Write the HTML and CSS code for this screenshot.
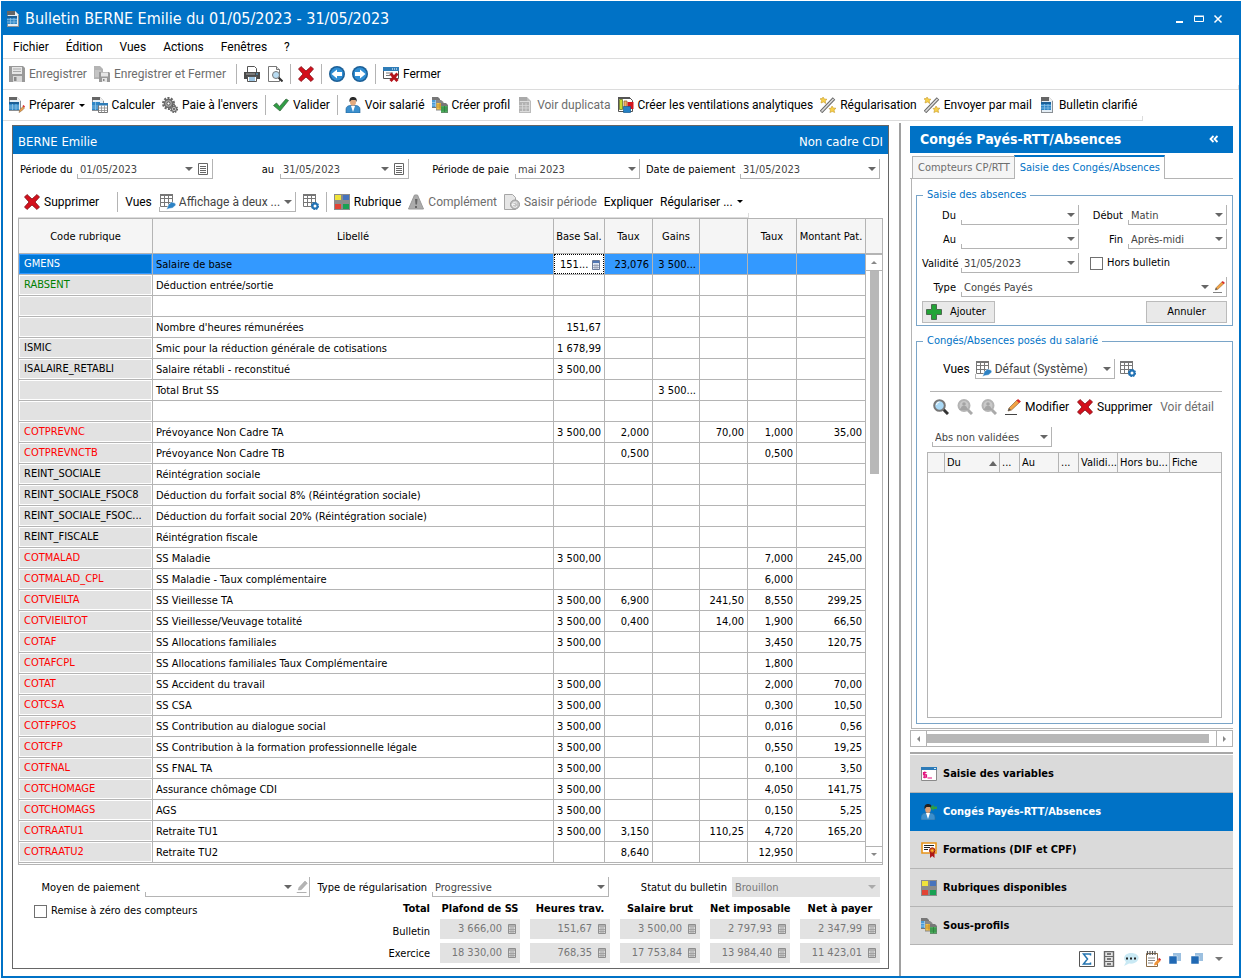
FILE: index.html
```html
<!DOCTYPE html>
<html lang="fr">

<head>
  <meta charset="utf-8">
  <meta name="viewport" content="width=device-width">
  <title>Bulletin BERNE Emilie</title>

  <link rel="stylesheet" href="styles.css">
</head>

<body>
  <!-- icon set -->
  <svg class="sprite" aria-hidden="true">
    <symbol id="i-doc" viewBox="0 0 16 16"><path d="M2 0h8l4 4v12H2z" fill="#8a8f94" /><path d="M3 4h10v11H3z" fill="#e4eef6" /><path d="M2 0h8v4H2z" fill="#666" /><path d="M10 0v4h4z" fill="#eee" /><path d="M2 5h10v8H2z" fill="#2f86c6" /><path d="M2 5h10v2H2z" fill="#1c5f96" /><path d="M2 8.500h10M2 11h10M5.500 7v6M9 7v6" stroke="#8fc4e8" stroke-width=".7" /></symbol>
    <symbol id="i-docgrey" viewBox="0 0 16 16"><path d="M2 0h8l4 4v12H2z" fill="#bbb" /><path d="M3 4h10v11H3z" fill="#ddd" /><path d="M2 0h8v4H2z" fill="#aaa" /><path d="M2 5h10v9H2z" fill="#b2b2b2" /><path d="M2 8.500h10M2 11h10M5.500 6v8M9 6v8" stroke="#ddd" stroke-width=".7" /></symbol>
    <symbol id="i-save" viewBox="0 0 16 16"><path d="M0 0h14l2 2v14H0z" fill="#999" /><path d="M3 1h10v7H3z" fill="#e6e6e6" /><path d="M4 3h8M4 5.500h8" stroke="#aaa" /><path d="M4 10h9v6H4z" fill="#d8d8d8" /><path d="M5 11h2.500v4H5z" fill="#888" /></symbol>
    <symbol id="i-saveclose" viewBox="0 0 16 16"><path d="M0 0h6l3 3v10H0z" fill="#b4b4b4" /><path d="M1 4h6v7H1z" fill="#c4c4c4" /><path d="M5 6h10l1 1v9H5z" fill="#999" /><path d="M7 6.500h7v4H7zM8 12h5v4H8z" fill="#e6e6e6" /><path d="M9 13h1.500v2H9z" fill="#888" /></symbol>
    <symbol id="i-print" viewBox="0 0 16 16"><path d="M3.500.5h7l2 2v4h-9z" fill="#fff" stroke="#555" /><path d="M0 6h16v7h-3v-2H3v2H0z" fill="#4b4b4b" /><path d="M2 8h9" stroke="#aaa" /><path d="M12 8h2" stroke="#5ab0e8" /><path d="M3.500 10.500h9v5h-9z" fill="#fff" stroke="#555" /><path d="M5 12h6M5 14h6" stroke="#3a8cc8" /></symbol>
    <symbol id="i-preview" viewBox="0 0 16 16"><path d="M1.500.5h8l3 3v12h-11z" fill="#fff" stroke="#777" /><path d="M9.500.5v3h3" fill="#ddd" stroke="#777" /><path d="M11.500 11.500l4 4" stroke="#333" stroke-width="2" /><circle cx="9" cy="9" r="3.500" fill="#b9dcf2" stroke="#777" /></symbol>
    <symbol id="i-cross" viewBox="0 0 16 16"><path d="M3 .5L8 5l5-4.500L15.500 3 11 8l4.500 5-2.500 2.500L8 11l-5 4.500L.5 13 5 8 .5 3z" fill="#d4101c" stroke="#7d1016" stroke-width=".8" /></symbol>
    <symbol id="i-left" viewBox="0 0 16 16"><circle cx="8" cy="8" r="8" fill="#1c5f96" /><circle cx="8" cy="8" r="6.500" fill="#2f8ed4" /><path d="M2.500 8L8 3.500v2.500h5v4H8v2.500z" fill="#fff" /></symbol>
    <symbol id="i-right" viewBox="0 0 16 16"><circle cx="8" cy="8" r="8" fill="#1c5f96" /><circle cx="8" cy="8" r="6.500" fill="#2f8ed4" /><path d="M13.500 8L8 3.500v2.500H3v4h5v2.500z" fill="#fff" /></symbol>
    <symbol id="i-closewin" viewBox="0 0 16 16"><path d="M.5 1.500h15v11H.5z" fill="#fff" stroke="#555" /><path d="M0 1h16v4H0z" fill="#2f7db8" /><path d="M9 3h1M11 3h1M13 3h1" stroke="#fff" /><path d="M3 7h7M3 9.500h4" stroke="#777" /><path d="M7.500 7.500l7 7.500M14.500 7.500l-7 7.500" stroke="#b5141b" stroke-width="3" /></symbol>
    <symbol id="i-prepare" viewBox="0 0 16 16"><path d="M0 0h8l4 4v10H0z" fill="#8a8f94" /><path d="M1 3h10v10H1z" fill="#e4eef6" /><path d="M0 0h8v3H0z" fill="#666" /><path d="M8 0v4h4z" fill="#eee" /><path d="M0 5h10v8H0z" fill="#2f86c6" /><path d="M0 5h10v2H0z" fill="#1c5f96" /><path d="M0 9h10M0 11h10M3.500 7v6M7 7v6" stroke="#9bcbea" stroke-width=".7" /><path d="M10 15.500l1-3 3-3 1.500 1.500-3 3z" fill="#f0a34a" stroke="#8d6a45" stroke-width=".6" /><path d="M13.500 9l1-1L16 9.500l-1 1z" fill="#d22" /></symbol>
    <symbol id="i-calc" viewBox="0 0 16 16"><path d="M0 0h8l4 4v10H0z" fill="#8a8f94" /><path d="M1 3h10v10H1z" fill="#e4eef6" /><path d="M0 0h8v3H0z" fill="#666" /><path d="M8 0v4h4z" fill="#eee" /><path d="M0 5h8v8H0z" fill="#2f86c6" /><path d="M0 9h6M0 11h6M3.500 5v8" stroke="#9bcbea" stroke-width=".7" /><path d="M6.500 7.500h9v8h-9z" fill="#fff" stroke="#777" /><path d="M6 6h10v2.500H6z" fill="#2f7db8" /><path d="M7 11h8M7 13.500h8M9.500 8.500v7M12.500 8.500v7" stroke="#888" stroke-width=".8" /></symbol>
    <symbol id="i-gears" viewBox="0 0 16 16"><circle cx="6.500" cy="6.500" r="5.300" fill="none" stroke="#666" stroke-width="2.400" stroke-dasharray="2 1.330" /><circle cx="6.500" cy="6.500" r="4" fill="#aaa" stroke="#6a6a6a" stroke-width="1.500" /><circle cx="6.500" cy="6.500" r="1.600" fill="#fff" stroke="#555" /><circle cx="12" cy="12" r="3.200" fill="#bbb" stroke="#555" stroke-width="1.600" stroke-dasharray="1.500 1" /><circle cx="12" cy="12" r="2.500" fill="#ccc" stroke="#666" /><circle cx="12" cy="12" r="1" fill="#555" /></symbol>
    <symbol id="i-check" viewBox="0 0 16 16"><path d="M.5 8.500L3.500 6l3 3.500L13 2l2.500 1.500L7 14z" fill="#2f9e44" stroke="#3c6b44" stroke-width=".8" /></symbol>
    <symbol id="i-person" viewBox="0 0 16 16"><path d="M1 16v-4c0-2 2-3.500 4-3.500h6c2 0 4 1.500 4 3.500v4z" fill="#3b8fcd" stroke="#1d5e93" stroke-width=".6" /><path d="M6 9l2 6 2-6z" fill="#fff" /><ellipse cx="8" cy="5" rx="3" ry="3.800" fill="#e3ab80" /><path d="M4.500 5C4 1 6 0 8 0s4.500 1 3.500 5L10.500 3h-4z" fill="#2b2b2b" /></symbol>
    <symbol id="i-profiles" viewBox="0 0 16 16"><path d="M0 0h6l2 2v9H0z" fill="#777" /><path d="M0 3h7v7H0z" fill="#4a9ad6" /><path d="M0 5.500h7M0 8h7M3.500 3v7" stroke="#a8d3f0" stroke-width=".7" /><path d="M4 3h5l2.500 2v8.500H4z" fill="#888" /><path d="M4.500 6H11v6.500H4.500z" fill="#f0c04a" /><path d="M4.500 8H11M4.500 10H11M8 6v6" stroke="#b8842a" stroke-width=".7" /><path d="M9 6h5l2 2v8H9z" fill="#777" /><path d="M9 9h6.500v6.500H9z" fill="#4bab5c" /><path d="M9 11h6.500M9 13h6.500M12.500 9v6" stroke="#2a7b38" stroke-width=".7" /></symbol>
    <symbol id="i-ventil" viewBox="0 0 16 16"><path d="M.5.500h11l3 3v11H.5z" fill="#fff" stroke="#555" /><path d="M0 0h12v2H0z" fill="#555" /><path d="M1.500 2.500h3v10h-3z" fill="#c8dc30" stroke="#667520" stroke-width=".8" /><path d="M6 4h3v8H6z" fill="#f0b060" stroke="#96683a" stroke-width=".8" /><path d="M9.500 5h6v7h-6z" fill="#d3161e" /><path d="M5.500 9.500h7v6h-7z" fill="#2480c4" stroke="#165a90" stroke-width=".7" /></symbol>
    <symbol id="i-wand" viewBox="0 0 16 16"><path d="M1 15L14 1.500" stroke="#666" stroke-width="3.500" /><path d="M1.500 14.500L13.500 2" stroke="#ddd" stroke-width="1.600" /><path d="M3 0l1.300 2 2.700.3L5.200 4l.6 2.500L3.500 5 1 6l.6-2.500L0 1.700l2.300-.2zM12 9l1.200 2 2.800.3-2 1.700.7 2.500-2.500-1-2.300 1 .6-2.500L9 11.500l2.200-.4z" fill="#f8d04a" stroke="#c89c2c" stroke-width=".6" /></symbol>
    <symbol id="i-list" viewBox="0 0 12 14"><path d="M1.500 1.500h9v11h-9z" fill="#fff" stroke="#666" /><path d="M3 4.500h6M3 6.500h6M3 8.500h6M3 10.500h6" stroke="#666" /></symbol>
    <symbol id="i-gridedit" viewBox="0 0 16 16"><path d="M.5.500h12v12H.5zM1 4.500h11M1 8.500h11M4.500 1v11M8.500 1v11" fill="#fff" stroke="#777" /><path d="M0 0h13v2H0z" fill="#777" /><path d="M6.500 15.500l2-5 3-2.500 3.500 1 1 2-3.500 3-3 .5z" fill="#2d82c4" stroke="#fff" stroke-width=".5" /></symbol>
    <symbol id="i-gridgear" viewBox="0 0 16 16"><path d="M.5.500h12v12H.5zM1 4.500h11M1 8.500h11M4.500 1v11M8.500 1v11" fill="#fff" stroke="#777" /><path d="M0 0h13v2H0z" fill="#777" /><circle cx="12" cy="12" r="2.500" fill="#fff" stroke="#2272b4" stroke-width="2" /><circle cx="12" cy="12" r="3.500" fill="none" stroke="#2272b4" stroke-width="1.200" stroke-dasharray="1.500 1.200" /></symbol>
    <symbol id="i-squares" viewBox="0 0 16 16"><path d="M0 0h16v16H0z" fill="#8b8b8b" /><path d="M1 1h6v5H1z" fill="#f0e33a" /><path d="M9 1h6v5H9z" fill="#4673bd" /><path d="M1 10h6v5H1z" fill="#e24334" /><path d="M9 10h6v5H9z" fill="#18a153" /></symbol>
    <symbol id="i-warn" viewBox="0 0 16 16"><path d="M6.500 1h3L15.500 15H.5z" fill="#ababab" stroke="#999" /><path d="M7 5h2.500L9 10.500H7.500zM7 12h2v2H7z" fill="#666" /></symbol>
    <symbol id="i-docredo" viewBox="0 0 16 16"><path d="M.5.500h8l3 3v12H.5z" fill="#e6e6e6" stroke="#a6a6a6" /><circle cx="11" cy="10.500" r="4.500" fill="#c5c5c5" stroke="#999" /><path d="M13 9.500a2.500 2.500 0 1 0 0 2.500M8 10.500h3" fill="none" stroke="#f2f2f2" /></symbol>
    <symbol id="i-keys" viewBox="0 0 10 12"><path d="M1.500 1.500h7v9h-7z" fill="#dfe7f4" stroke="#6b7a99" /><path d="M2 2h6v2H2z" fill="#5077b5" /><path d="M2 6.500h6M2 8.500h6M4 5v5M6 5v5" stroke="#8b94a8" stroke-width=".7" /></symbol>
    <symbol id="i-keysgrey" viewBox="0 0 10 12"><path d="M1.500 1.500h7v9h-7z" fill="#d6d6d6" stroke="#8e8e8e" /><path d="M2 2h6v2H2z" fill="#b0b0b0" /><path d="M2 6.500h6M2 8.500h6M4 4v6M6 4v6" stroke="#9a9a9a" stroke-width=".8" /></symbol>
    <symbol id="i-plus" viewBox="0 0 16 16"><path d="M5.500.5h5v5h5v5h-5v5h-5v-5h-5v-5h5z" fill="#22a436" stroke="#4d6b50" /></symbol>
    <symbol id="i-pencil" viewBox="0 0 16 16"><path d="M3 12l1-3L12 1l2.500 2.500L6.500 11z" fill="#f3a344" stroke="#8d6a45" stroke-width=".7" /><path d="M11.500 1.500L13 0l3 2.500-2 1.500z" fill="#d92b2b" /><path d="M3 12l1-3 2 2z" fill="#555" /><path d="M0 15.500h12" stroke="#444" /></symbol>
    <symbol id="i-pencilgrey" viewBox="0 0 16 16"><path d="M3 12l1-3.500L12 0l3 3-8 8.500z" fill="#b5b5b5" stroke="#999" stroke-width=".6" /><path d="M1 15.500h13" stroke="#888" /></symbol>
    <symbol id="i-zoom" viewBox="0 0 16 16"><path d="M10 10l5 5" stroke="#333" stroke-width="3" /><circle cx="6.500" cy="6.500" r="5.300" fill="#a9d8f5" stroke="#777" stroke-width="2" /><path d="M3.500 6a3 3 0 0 1 3-3" fill="none" stroke="#fff" /></symbol>
    <symbol id="i-zoomgrey" viewBox="0 0 16 16"><path d="M10 10l5 5" stroke="#aaa" stroke-width="3" /><circle cx="7" cy="6.500" r="5.500" fill="#c9c9c9" stroke="#b4b4b4" stroke-width="2" /><path d="M4 9c0-3 6-3 6 0l2 2H2z" fill="#a4a4a4" /><circle cx="7" cy="5" r="1.800" fill="#a4a4a4" /></symbol>
    <symbol id="i-console" viewBox="0 0 16 16"><path d="M.5 1.500h15v13H.5z" fill="#fff" stroke="#8a8a8a" /><path d="M0 1h16v3H0z" fill="#2d7bb8" /><path d="M13 2.500h2" stroke="#d9ecf8" /><path d="M5.500 6.500h-3v2.300h3v2.300h-3.500M3.800 5.500v6.800M6.500 12H11" fill="none" stroke="#e2127c" stroke-width="1.200" /></symbol>
    <symbol id="i-personarrow" viewBox="0 0 16 16"><path d="M0 16v-3c0-2 2-4 4-4h6c2 0 4 2 4 4v3z" fill="#3b8fcd" stroke="#2e6c9c" stroke-width=".6" /><path d="M5 9l2 6 2-6z" fill="#fff" /><ellipse cx="7" cy="5.500" rx="2.800" ry="3.500" fill="#dca075" /><path d="M3.500 5C3 1 5 0 7 0s4.500 1 3.500 5L9.500 3h-4z" fill="#222" /><path d="M9 3.500L12.500.5v2H16v2.500h-3.500V7z" fill="#2c9e46" /></symbol>
    <symbol id="i-cert" viewBox="0 0 16 16"><path d="M1 1h14v10H1z" fill="#fff" stroke="#e8941a" stroke-width="1.600" /><path d="M3 3.500h10M3 5.500h6M3 7.500h4" stroke="#222" /><path d="M9 9h4.500v7l-2.300-2L9 16z" fill="#b0161b" /><circle cx="11.200" cy="8.500" r="2.700" fill="#e2671c" stroke="#97180f" /><circle cx="11.200" cy="8.500" r="1" fill="#f6c42c" /></symbol>
    <symbol id="i-sigma" viewBox="0 0 16 16"><path d="M.5.500h15v15H.5z" fill="#fff" stroke="#555" /><path d="M11.500 4.500V3H4.500l4 5-4 5h7v-1.500" fill="none" stroke="#2474b0" stroke-width="1.500" /></symbol>
    <symbol id="i-cabinet" viewBox="0 0 16 16"><path d="M3.500.5h9v15h-9z" fill="#e4e4e4" stroke="#666" stroke-width="1.400" /><path d="M4 5.500h8M4 10.500h8" stroke="#666" /><path d="M6 3h4M6 8h4M6 13h4" stroke="#555" stroke-width="1.400" /></symbol>
    <symbol id="i-bubble" viewBox="0 0 16 16"><path d="M1 15l2-4C-1 7 2 2 8 2s9 3.500 7 7-6 4-9 3.500z" fill="#c9e9f4" /><path d="M3 7.500h2M7 7.500h2M11 7.500h2" stroke="#222" stroke-width="2" /></symbol>
    <symbol id="i-notepad" viewBox="0 0 16 16"><path d="M1.500 2.500h11v13h-11z" fill="#fff" stroke="#8a6c48" /><path d="M2.500 0v4M5 0v4M7.500 0v4M10 0v4" stroke="#555" stroke-width="1.200" /><path d="M3 7h7M3 9.500h7M3 12h5" stroke="#888" /><path d="M9 14.500l.5-2.500 4-4 2 2-4 4z" fill="#f0953a" /><path d="M13 8l1.500-1L16 8.500l-1 1.500z" fill="#d8232a" /></symbol>
    <symbol id="i-overlap" viewBox="0 0 16 16"><path d="M6 2h8v8H6z" fill="#9cc0e0" /><path d="M2 5h8v8H2z" fill="#2169b4" stroke="#fff" stroke-width=".5" /></symbol>
  </svg>

  <div class="window">
    <header class="titlebar">
      <svg class="icon"><use href="#i-doc" /></svg>
      <h1 class="titlebar__text">Bulletin BERNE Emilie du 01/05/2023 - 31/05/2023</h1>
      <button class="titlebar__button" type="button" aria-label="Réduire"><svg viewBox="0 0 10 10"><path d="M1 8h7" stroke="#fff" stroke-width="2" /></svg></button>
      <button class="titlebar__button" type="button" aria-label="Agrandir"><svg viewBox="0 0 10 10"><path d="M.5 2.500h9v5h-9zM0 2h10" fill="none" stroke="#fff" /></svg></button>
      <button class="titlebar__button" type="button" aria-label="Fermer la fenêtre"><svg viewBox="0 0 10 10"><path d="M1.500 1.500l7 7M8.500 1.500l-7 7" stroke="#fff" stroke-width="1.500" /></svg></button>
    </header>

    <nav class="menu">
      <button class="menu__item" type="button">Fichier</button>
      <button class="menu__item" type="button">Édition</button>
      <button class="menu__item" type="button">Vues</button>
      <button class="menu__item" type="button">Actions</button>
      <button class="menu__item" type="button">Fenêtres</button>
      <button class="menu__item" type="button">?</button>
    </nav>

    <div class="toolbar">
      <button class="tool" type="button" disabled><svg class="icon"><use href="#i-save" /></svg>Enregistrer</button>
      <button class="tool" type="button" disabled><svg class="icon"><use href="#i-saveclose" /></svg>Enregistrer et Fermer</button>
      <span class="toolbar__sep toolbar__sep--wide"></span>
      <button class="tool" type="button" aria-label="Imprimer"><svg class="icon"><use href="#i-print" /></svg></button>
      <button class="tool" type="button" aria-label="Aperçu"><svg class="icon"><use href="#i-preview" /></svg></button>
      <span class="toolbar__sep"></span>
      <button class="tool" type="button" aria-label="Supprimer le bulletin"><svg class="icon"><use href="#i-cross" /></svg></button>
      <span class="toolbar__sep"></span>
      <button class="tool" type="button" aria-label="Précédent"><svg class="icon"><use href="#i-left" /></svg></button>
      <button class="tool" type="button" aria-label="Suivant"><svg class="icon"><use href="#i-right" /></svg></button>
      <span class="toolbar__sep"></span>
      <button class="tool" type="button"><svg class="icon"><use href="#i-closewin" /></svg>Fermer</button>
    </div>

    <div class="toolbar toolbar--short">
      <button class="tool" type="button"><svg class="icon"><use href="#i-prepare" /></svg>Préparer<span class="caret"></span></button>
      <button class="tool" type="button"><svg class="icon"><use href="#i-calc" /></svg>Calculer</button>
      <button class="tool" type="button"><svg class="icon"><use href="#i-gears" /></svg>Paie à l'envers</button>
      <span class="toolbar__sep"></span>
      <button class="tool" type="button"><svg class="icon"><use href="#i-check" /></svg>Valider</button>
      <span class="toolbar__sep"></span>
      <button class="tool" type="button"><svg class="icon"><use href="#i-person" /></svg>Voir salarié</button>
      <button class="tool" type="button"><svg class="icon"><use href="#i-profiles" /></svg>Créer profil</button>
      <button class="tool" type="button" disabled><svg class="icon"><use href="#i-docgrey" /></svg>Voir duplicata</button>
      <button class="tool" type="button"><svg class="icon"><use href="#i-ventil" /></svg>Créer les ventilations analytiques</button>
      <button class="tool" type="button"><svg class="icon"><use href="#i-wand" /></svg>Régularisation</button>
      <button class="tool" type="button"><svg class="icon"><use href="#i-wand" /></svg>Envoyer par mail</button>
      <button class="tool" type="button"><svg class="icon"><use href="#i-doc" /></svg>Bulletin clarifié</button>
    </div>

    <div class="workspace">
      <main class="bulletin">
        <div class="bulletin__header">
          <h2 class="bulletin__name">BERNE Emilie</h2>
          <span>Non cadre CDI</span>
        </div>

        <div class="periods">
          <label for="period-from">Période du</label>
          <div class="field"><input id="period-from" value="01/05/2023"><span class="caret"></span><svg class="field__list"><use href="#i-list" /></svg></div>
          <label for="period-to">au</label>
          <div class="field"><input id="period-to" value="31/05/2023"><span class="caret"></span><svg class="field__list"><use href="#i-list" /></svg></div>
          <label for="pay-period">Période de paie</label>
          <div class="field"><select id="pay-period"><option>mai 2023</option></select><span class="caret"></span></div>
          <label for="pay-date">Date de paiement</label>
          <div class="field"><input id="pay-date" value="31/05/2023"><span class="caret"></span></div>
        </div>

        <div class="actions">
          <button class="tool" type="button"><svg class="icon"><use href="#i-cross" /></svg>Supprimer</button>
          <span class="toolbar__sep actions__sep"></span>
          <label for="view">Vues</label>
          <div class="field field--view"><svg class="icon"><use href="#i-gridedit" /></svg><select id="view"><option>Affichage à deux ...</option></select><span class="caret"></span></div>
          <button class="tool" type="button" aria-label="Configurer les vues"><svg class="icon"><use href="#i-gridgear" /></svg></button>
          <span class="toolbar__sep"></span>
          <button class="tool" type="button"><svg class="icon"><use href="#i-squares" /></svg>Rubrique</button>
          <button class="tool" type="button" disabled><svg class="icon"><use href="#i-warn" /></svg>Complément</button>
          <button class="tool" type="button" disabled><svg class="icon"><use href="#i-docredo" /></svg>Saisir période</button>
          <button class="tool" type="button">Expliquer</button>
          <button class="tool" type="button">Régulariser ...<span class="caret"></span></button>
        </div>

        <div class="grid">
          <table class="lines">
            <colgroup>
              <col class="lines__code"><col><col class="lines__base"><col class="lines__rate"><col class="lines__gain"><col class="lines__rate"><col class="lines__rate2"><col class="lines__amount">
            </colgroup>
            <thead>
              <tr><th>Code rubrique</th><th>Libellé</th><th>Base Sal.</th><th>Taux</th><th>Gains</th><th></th><th>Taux</th><th>Montant Pat.</th></tr>
            </thead>
            <tbody>
              <tr class="is-selected"><td>GMENS</td><td>Salaire de base</td><td class="editing"><div class="editing__box"><input aria-label="Base salariale" value="151..."><svg class="keys"><use href="#i-keys" /></svg></div></td><td>23,076</td><td>3 500...</td><td></td><td></td><td></td></tr>
              <tr class="is-green"><td>RABSENT</td><td>Déduction entrée/sortie</td><td></td><td></td><td></td><td></td><td></td><td></td></tr>
              <tr><td></td><td></td><td></td><td></td><td></td><td></td><td></td><td></td></tr>
              <tr><td></td><td>Nombre d'heures rémunérées</td><td>151,67</td><td></td><td></td><td></td><td></td><td></td></tr>
              <tr><td>ISMIC</td><td>Smic pour la réduction générale de cotisations</td><td>1 678,99</td><td></td><td></td><td></td><td></td><td></td></tr>
              <tr><td>ISALAIRE_RETABLI</td><td>Salaire rétabli - reconstitué</td><td>3 500,00</td><td></td><td></td><td></td><td></td><td></td></tr>
              <tr><td></td><td>Total Brut SS</td><td></td><td></td><td>3 500...</td><td></td><td></td><td></td></tr>
              <tr><td></td><td></td><td></td><td></td><td></td><td></td><td></td><td></td></tr>
              <tr class="is-red"><td>COTPREVNC</td><td>Prévoyance Non Cadre TA</td><td>3 500,00</td><td>2,000</td><td></td><td>70,00</td><td>1,000</td><td>35,00</td></tr>
              <tr class="is-red"><td>COTPREVNCTB</td><td>Prévoyance Non Cadre TB</td><td></td><td>0,500</td><td></td><td></td><td>0,500</td><td></td></tr>
              <tr><td>REINT_SOCIALE</td><td>Réintégration sociale</td><td></td><td></td><td></td><td></td><td></td><td></td></tr>
              <tr><td>REINT_SOCIALE_FSOC8</td><td>Déduction du forfait social 8% (Réintégration sociale)</td><td></td><td></td><td></td><td></td><td></td><td></td></tr>
              <tr><td>REINT_SOCIALE_FSOC...</td><td>Déduction du forfait social 20% (Réintégration sociale)</td><td></td><td></td><td></td><td></td><td></td><td></td></tr>
              <tr><td>REINT_FISCALE</td><td>Réintégration fiscale</td><td></td><td></td><td></td><td></td><td></td><td></td></tr>
              <tr class="is-red"><td>COTMALAD</td><td>SS Maladie</td><td>3 500,00</td><td></td><td></td><td></td><td>7,000</td><td>245,00</td></tr>
              <tr class="is-red"><td>COTMALAD_CPL</td><td>SS Maladie - Taux complémentaire</td><td></td><td></td><td></td><td></td><td>6,000</td><td></td></tr>
              <tr class="is-red"><td>COTVIEILTA</td><td>SS Vieillesse TA</td><td>3 500,00</td><td>6,900</td><td></td><td>241,50</td><td>8,550</td><td>299,25</td></tr>
              <tr class="is-red"><td>COTVIEILTOT</td><td>SS Vieillesse/Veuvage totalité</td><td>3 500,00</td><td>0,400</td><td></td><td>14,00</td><td>1,900</td><td>66,50</td></tr>
              <tr class="is-red"><td>COTAF</td><td>SS Allocations familiales</td><td>3 500,00</td><td></td><td></td><td></td><td>3,450</td><td>120,75</td></tr>
              <tr class="is-red"><td>COTAFCPL</td><td>SS Allocations familiales Taux Complémentaire</td><td></td><td></td><td></td><td></td><td>1,800</td><td></td></tr>
              <tr class="is-red"><td>COTAT</td><td>SS Accident du travail</td><td>3 500,00</td><td></td><td></td><td></td><td>2,000</td><td>70,00</td></tr>
              <tr class="is-red"><td>COTCSA</td><td>SS CSA</td><td>3 500,00</td><td></td><td></td><td></td><td>0,300</td><td>10,50</td></tr>
              <tr class="is-red"><td>COTFPFOS</td><td>SS Contribution au dialogue social</td><td>3 500,00</td><td></td><td></td><td></td><td>0,016</td><td>0,56</td></tr>
              <tr class="is-red"><td>COTCFP</td><td>SS Contribution à la formation professionnelle légale</td><td>3 500,00</td><td></td><td></td><td></td><td>0,550</td><td>19,25</td></tr>
              <tr class="is-red"><td>COTFNAL</td><td>SS FNAL TA</td><td>3 500,00</td><td></td><td></td><td></td><td>0,100</td><td>3,50</td></tr>
              <tr class="is-red"><td>COTCHOMAGE</td><td>Assurance chômage CDI</td><td>3 500,00</td><td></td><td></td><td></td><td>4,050</td><td>141,75</td></tr>
              <tr class="is-red"><td>COTCHOMAGS</td><td>AGS</td><td>3 500,00</td><td></td><td></td><td></td><td>0,150</td><td>5,25</td></tr>
              <tr class="is-red"><td>COTRAATU1</td><td>Retraite TU1</td><td>3 500,00</td><td>3,150</td><td></td><td>110,25</td><td>4,720</td><td>165,20</td></tr>
              <tr class="is-red"><td>COTRAATU2</td><td>Retraite TU2</td><td></td><td>8,640</td><td></td><td></td><td>12,950</td><td></td></tr>
            </tbody>
          </table>
          <div class="grid__side">
            <div class="grid__corner"></div>
            <div class="vscroll">
              <button class="vscroll__button" type="button" aria-label="Monter"><span class="arrow arrow--up"></span></button>
              <div class="vscroll__thumb"></div>
              <button class="vscroll__button" type="button" aria-label="Descendre"><span class="arrow arrow--down"></span></button>
            </div>
          </div>
        </div>

        <div class="settings">
          <label for="payment">Moyen de paiement</label>
          <div class="field"><select id="payment"><option></option></select><span class="caret"></span><svg class="field__pencil"><use href="#i-pencilgrey" /></svg></div>
          <label for="regul">Type de régularisation</label>
          <div class="field"><select id="regul"><option>Progressive</option></select><span class="caret"></span></div>
          <label for="status">Statut du bulletin</label>
          <div class="field field--disabled"><select id="status" disabled><option>Brouillon</option></select><span class="caret"></span></div>
        </div>

        <div class="summary">
          <label class="check"><input type="checkbox">Remise à zéro des compteurs</label>
          <table class="totals">
            <thead>
              <tr><th>Total</th><th>Plafond de SS</th><th>Heures trav.</th><th>Salaire brut</th><th>Net imposable</th><th>Net à payer</th></tr>
            </thead>
            <tbody>
              <tr>
                <th>Bulletin</th>
                <td><div class="amount"><input aria-label="Plafond de SS, bulletin" value="3 666,00" disabled><svg class="keys"><use href="#i-keysgrey" /></svg></div></td>
                <td><div class="amount"><input aria-label="Heures, bulletin" value="151,67" disabled><svg class="keys"><use href="#i-keysgrey" /></svg></div></td>
                <td><div class="amount"><input aria-label="Salaire brut, bulletin" value="3 500,00" disabled><svg class="keys"><use href="#i-keysgrey" /></svg></div></td>
                <td><div class="amount"><input aria-label="Net imposable, bulletin" value="2 797,93" disabled><svg class="keys"><use href="#i-keysgrey" /></svg></div></td>
                <td><div class="amount"><input aria-label="Net à payer, bulletin" value="2 347,99" disabled><svg class="keys"><use href="#i-keysgrey" /></svg></div></td>
              </tr>
              <tr>
                <th>Exercice</th>
                <td><div class="amount"><input aria-label="Plafond de SS, exercice" value="18 330,00" disabled><svg class="keys"><use href="#i-keysgrey" /></svg></div></td>
                <td><div class="amount"><input aria-label="Heures, exercice" value="768,35" disabled><svg class="keys"><use href="#i-keysgrey" /></svg></div></td>
                <td><div class="amount"><input aria-label="Salaire brut, exercice" value="17 753,84" disabled><svg class="keys"><use href="#i-keysgrey" /></svg></div></td>
                <td><div class="amount"><input aria-label="Net imposable, exercice" value="13 984,40" disabled><svg class="keys"><use href="#i-keysgrey" /></svg></div></td>
                <td><div class="amount"><input aria-label="Net à payer, exercice" value="11 423,01" disabled><svg class="keys"><use href="#i-keysgrey" /></svg></div></td>
              </tr>
            </tbody>
          </table>
        </div>
      </main>

      <div class="splitter"></div>

      <aside class="side">
        <div class="side__header">
          <h2 class="side__title">Congés Payés-RTT/Absences</h2>
          <button class="side__collapse" type="button" aria-label="Replier"><svg viewBox="0 0 10 8"><path d="M4.500 1L1.500 4l3 3M8.500 1l-3 3 3 3" fill="none" stroke="#fff" stroke-width="1.800" /></svg></button>
        </div>

        <div class="tabs">
          <button class="tab" type="button">Compteurs CP/RTT</button>
          <button class="tab tab--active" type="button">Saisie des Congés/Absences</button>
        </div>

        <div class="pane">
          <fieldset class="group">
            <legend>Saisie des absences</legend>
            <div class="absence">
              <label for="abs-from">Du</label>
              <div class="field"><input id="abs-from"><span class="caret"></span></div>
              <label for="abs-start">Début</label>
              <div class="field"><select id="abs-start"><option>Matin</option></select><span class="caret"></span></div>
              <label for="abs-to">Au</label>
              <div class="field"><input id="abs-to"><span class="caret"></span></div>
              <label for="abs-end">Fin</label>
              <div class="field"><select id="abs-end"><option>Après-midi</option></select><span class="caret"></span></div>
              <label for="abs-valid">Validité</label>
              <div class="field"><input id="abs-valid" value="31/05/2023"><span class="caret"></span></div>
              <label class="check absence__check"><input type="checkbox">Hors bulletin</label>
              <label for="abs-type">Type</label>
              <div class="field absence__type"><select id="abs-type"><option>Congés Payés</option></select><span class="caret"></span><svg class="field__pencil"><use href="#i-pencil" /></svg></div>
            </div>
            <div class="group__buttons">
              <button class="button button--add" type="button"><svg class="icon"><use href="#i-plus" /></svg>Ajouter</button>
              <button class="button button--cancel" type="button">Annuler</button>
            </div>
          </fieldset>

          <fieldset class="group group--grow">
            <legend>Congés/Absences posés du salarié</legend>
            <div class="posted__view">
              <label for="posted-view">Vues</label>
              <div class="field field--view"><svg class="icon"><use href="#i-gridedit" /></svg><select id="posted-view"><option>Défaut (Système)</option></select><span class="caret"></span></div>
              <button class="tool" type="button" aria-label="Configurer les vues des congés"><svg class="icon"><use href="#i-gridgear" /></svg></button>
            </div>
            <div class="posted__tools">
              <button class="tool" type="button" aria-label="Rechercher"><svg class="icon"><use href="#i-zoom" /></svg></button>
              <button class="tool" type="button" aria-label="Rechercher avant" disabled><svg class="icon"><use href="#i-zoomgrey" /></svg></button>
              <button class="tool" type="button" aria-label="Rechercher après" disabled><svg class="icon"><use href="#i-zoomgrey" /></svg></button>
              <button class="tool" type="button"><svg class="icon"><use href="#i-pencil" /></svg>Modifier</button>
              <button class="tool" type="button"><svg class="icon"><use href="#i-cross" /></svg>Supprimer</button>
              <button class="tool" type="button" disabled>Voir détail</button>
            </div>
            <div class="posted__filter">
              <div class="field"><select aria-label="Filtre"><option>Abs non validées</option></select><span class="caret"></span></div>
            </div>
            <div class="posted__list">
              <table class="posted">
                <colgroup><col class="posted__mark"><col class="posted__from"><col class="posted__dots"><col class="posted__to"><col class="posted__dots"><col class="posted__to"><col class="posted__out"><col></colgroup>
                <thead>
                  <tr><th></th><th>Du<span class="arrow arrow--sort"></span></th><th>...</th><th>Au</th><th>...</th><th>Validi...</th><th>Hors bu...</th><th>Fiche</th></tr>
                </thead>
              </table>
            </div>
          </fieldset>
        </div>

        <div class="hscroll">
          <button class="hscroll__button" type="button" aria-label="Gauche"><span class="arrow arrow--left"></span></button>
          <div class="hscroll__thumb"></div>
          <button class="hscroll__button" type="button" aria-label="Droite"><span class="arrow arrow--right"></span></button>
        </div>

        <nav class="nav">
          <a class="nav__item" href="#variables"><svg class="icon"><use href="#i-console" /></svg>Saisie des variables</a>
          <a class="nav__item nav__item--active" href="#conges"><svg class="icon"><use href="#i-personarrow" /></svg>Congés Payés-RTT/Absences</a>
          <a class="nav__item" href="#formations"><svg class="icon"><use href="#i-cert" /></svg>Formations (DIF et CPF)</a>
          <a class="nav__item" href="#rubriques"><svg class="icon"><use href="#i-squares" /></svg>Rubriques disponibles</a>
          <a class="nav__item" href="#profils"><svg class="icon"><use href="#i-profiles" /></svg>Sous-profils</a>
        </nav>

        <div class="shortcuts">
          <button class="tool" type="button" aria-label="Cumuls"><svg class="icon"><use href="#i-sigma" /></svg></button>
          <button class="tool" type="button" aria-label="Archives"><svg class="icon"><use href="#i-cabinet" /></svg></button>
          <button class="tool" type="button" aria-label="Commentaires"><svg class="icon"><use href="#i-bubble" /></svg></button>
          <button class="tool" type="button" aria-label="Notes"><svg class="icon"><use href="#i-notepad" /></svg></button>
          <button class="tool" type="button" aria-label="Fenêtre 1"><svg class="icon"><use href="#i-overlap" /></svg></button>
          <button class="tool" type="button" aria-label="Fenêtre 2"><svg class="icon"><use href="#i-overlap" /></svg></button>
          <button class="tool" type="button" aria-label="Plus"><span class="caret"></span></button>
        </div>
      </aside>
    </div>
  </div>
</body>

</html>
```
FILE: styles.css
```css
:root {
  --color-accent: #0072c6;
  --color-line: #b4b4b4;
  --color-light: #dcdcdc;
  --color-text: #000;
  --color-value: #444;
  --color-muted: #6d6d6d;
  --font-form: "DejaVu Sans Condensed", "DejaVu Sans", sans-serif;
  --font-tool: Roboto, "Noto Sans", sans-serif;
}

* {
  box-sizing: border-box;
}

body {
  margin: 0;
  padding: 1px;
  background-color: #fff;
  font: 11px/14px var(--font-form);
  color: var(--color-text);
}

h1,
h2 {
  margin: 0;
  font-weight: normal;
}

button,
input,
select {
  margin: 0;
  padding: 0;
  border: 0;
  border-radius: 0;
  background: none;
  font: inherit;
  color: inherit;
}

select {
  appearance: none;
  opacity: 1;
}

.sprite {
  position: absolute;
  width: 0;
  height: 0;
}

.icon {
  flex: none;
  width: 16px;
  height: 16px;
}

.caret {
  flex: none;
  border: 4px solid transparent;
  border-top-color: #666;
  border-bottom: 0;
}

.window {
  display: flex;
  flex-direction: column;
  min-height: calc(100vh - 2px);
  border: 2px solid var(--color-accent);
}

/* title and menu */

.titlebar {
  display: flex;
  align-items: center;
  gap: 9px;
  height: 32px;
  padding: 0 16px 0 2px;
  background-color: var(--color-accent);
  color: #fff;
}

.titlebar__text {
  flex: 1;
  margin-left: -5px;
  font-size: 16px;
  line-height: 20px;
}

.titlebar__button,
.titlebar__button svg {
  display: block;
  width: 10px;
  height: 10px;
}

.menu {
  display: flex;
  gap: 17px;
  height: 24px;
  padding: 0 10px;
  border-bottom: 1px solid var(--color-light);
  font: 12px/16px var(--font-tool);
}

/* toolbars */

.toolbar {
  display: flex;
  align-items: center;
  gap: 7px;
  height: 31px;
  padding: 0 6px;
  border-bottom: 1px solid var(--color-light);
  background: linear-gradient(var(--color-light), var(--color-light)) right bottom / 1px 4px no-repeat;
}

.toolbar--short {
  align-self: flex-start;
}

.toolbar__sep {
  width: 1px;
  height: 20px;
  background-color: var(--color-line);
}

.toolbar__sep--wide {
  margin-left: 3px;
}

.tool {
  display: flex;
  align-items: center;
  gap: 4px;
  font: 12px/16px var(--font-tool);
  white-space: nowrap;
}

.tool:disabled {
  color: var(--color-muted);
}

.tool .caret {
  border-width: 3px 3px 0;
  border-top-color: #000;
}

/* fields */

.field {
  display: flex;
  align-items: center;
  gap: 4px;
  min-width: 0;
  height: 20px;
  padding: 1px 3px 0;
  border-right: 1px solid var(--color-line);
  border-bottom: 1px solid var(--color-line);
  background: linear-gradient(var(--color-line), var(--color-line)) left bottom / 1px 4px no-repeat;
  color: var(--color-value);
}

.field input,
.field select {
  flex: 1;
  min-width: 0;
  width: 0;
  height: 18px;
}

.field select {
  padding-top: 2px;
}

.field__list {
  width: 12px;
  height: 14px;
}

.field__pencil {
  width: 12px;
  height: 12px;
  margin-right: -2px;
}

.field--view {
  gap: 3px;
  padding-left: 1px;
  font: 12px/16px var(--font-tool);
}

.field--view select {
  padding-top: 0;
}

.field--disabled {
  border-color: #e2e2e2;
  background: #e2e2e2;
  color: #777;
}

.field--disabled .caret {
  border-top-color: #aaa;
}

.check {
  display: flex;
  align-items: center;
  gap: 4px;
}

.check input {
  appearance: none;
  width: 13px;
  height: 13px;
  border: 1px solid #707070;
  background-color: #fff;
}

/* bulletin */

.workspace {
  display: flex;
  flex: 1;
  padding: 2px 6px 0 9px;
}

.bulletin {
  flex: 1;
  min-width: 0;
  margin: 2px 10px 7px 0;
  border: 1px solid #666;
}

.bulletin__header {
  display: flex;
  align-items: center;
  justify-content: space-between;
  height: 28px;
  padding: 3px 5px 0;
  background-color: var(--color-accent);
  font-size: 13px;
  color: #fff;
}

.bulletin__name {
  font-size: 13px;
}

.periods {
  display: grid;
  grid-template-columns: 51px 136px 55px 129px 94px 125px 88px 1fr;
  align-items: center;
  column-gap: 6px;
  padding: 5px 8px 0 7px;
}

.periods label,
.settings label {
  padding-top: 1px;
  text-align: right;
  white-space: nowrap;
}

.actions {
  display: flex;
  align-items: center;
  gap: 7px;
  width: fit-content;
  height: 39px;
  margin-left: 5px;
  padding: 7px 6px 0;
  border-bottom: 1px solid var(--color-light);
  background: linear-gradient(var(--color-light), var(--color-light)) right bottom / 1px 4px no-repeat;
}

.actions label {
  font: 12px/16px var(--font-tool);
}

.actions .field {
  width: 137px;
}

.actions__sep {
  margin-left: 11px;
}

.grid {
  display: flex;
  margin: 0 5px;
  padding-bottom: 1px;
  border: 1px solid var(--color-line);
}

.lines {
  flex: 1;
  width: 0;
  table-layout: fixed;
  border-spacing: 0;
}

.lines__code {
  width: 134px;
}

.lines__base {
  width: 51px;
}

.lines__rate {
  width: 48px;
}

.lines__gain {
  width: 47px;
}

.lines__rate2 {
  width: 49px;
}

.lines__amount {
  width: 69px;
}

.lines th,
.lines td {
  height: 21px;
  padding: 2px 3px 0;
  border-right: 1px solid var(--color-line);
  border-bottom: 1px solid var(--color-line);
  text-align: right;
  white-space: nowrap;
}

.lines th {
  height: 35px;
  padding: 2px 0 0;
  background-color: #f5f5f5;
  font-weight: normal;
  text-align: center;
}

.lines td:nth-child(1) {
  padding: 0 5px;
  box-shadow: inset 0 0 0 1px #fff;
  background-color: #e2e2e2;
  text-align: left;
}

.lines td:nth-child(2) {
  text-align: left;
}

.is-green td:first-child {
  color: #008000;
}

.is-red td:first-child {
  color: #f00;
}

.is-selected td {
  background-color: #3399ff;
}

.lines .is-selected td:nth-child(1) {
  box-shadow: inset 0 0 0 1px #3399ff;
  background-color: #0078d7;
  color: #fff;
}

.lines .editing {
  padding: 0;
  background-color: #fff;
}

.editing__box {
  display: flex;
  align-items: center;
  gap: 2px;
  height: 20px;
  padding: 1px 2px 0 5px;
  border: 1px dotted #000;
}

.editing__box input {
  flex: 1;
  width: 0;
}

.keys {
  flex: none;
  width: 10px;
  height: 12px;
}

.grid__side {
  display: flex;
  flex-direction: column;
  width: 16px;
}

.grid__corner {
  height: 35px;
  border-bottom: 1px solid var(--color-line);
  background-color: #f5f5f5;
}

.vscroll {
  display: flex;
  flex: 1;
  flex-direction: column;
  align-items: center;
}

.vscroll__button {
  display: flex;
  align-items: center;
  justify-content: center;
  width: 100%;
  height: 17px;
  border: 1px solid var(--color-line);
  border-width: 1px 0;
}

.vscroll__thumb {
  width: 9px;
  height: 203px;
  margin-bottom: auto;
  background-color: #b8b8b8;
}

.arrow {
  flex: none;
  border: 3px solid transparent;
}

.arrow--up {
  border-top: 0;
  border-bottom-color: #888;
}

.arrow--down {
  border-top-color: #888;
  border-bottom: 0;
}

.arrow--left {
  border-right-color: #888;
  border-left: 0;
}

.arrow--right {
  border-right: 0;
  border-left-color: #888;
}

.arrow--sort {
  border-width: 0 4px 5px;
  border-bottom-color: #666;
}

.settings {
  display: grid;
  grid-template-columns: 120px 165px 112px 177px 113px 1fr;
  align-items: center;
  column-gap: 5px;
  padding: 12px 8px 0 7px;
}

.summary {
  display: flex;
  align-items: flex-start;
  justify-content: space-between;
  padding: 0 8px 5px 21px;
}

.summary .check {
  margin-top: 7px;
}

.totals {
  width: 500px;
  table-layout: fixed;
  border-spacing: 0;
}

.totals th {
  width: 90px;
  height: 22px;
  padding: 1px 0 0 10px;
  font-weight: bold;
  white-space: nowrap;
}

.totals th:first-child {
  width: 50px;
  padding: 1px 0 0;
  text-align: right;
}

.totals tbody th {
  height: 20px;
  font-weight: normal;
}

.totals td {
  padding: 0 0 4px 10px;
}

.totals tr:last-child td {
  padding-bottom: 0;
}

.amount {
  display: flex;
  align-items: center;
  gap: 5px;
  height: 20px;
  padding: 0 3px;
  background-color: #e2e2e2;
  color: #777;
}

.amount input {
  flex: 1;
  width: 0;
  text-align: right;
}

/* side panel */

.splitter {
  width: 2px;
  background-color: #a0a0a0;
}

.side {
  display: flex;
  flex-direction: column;
  width: 332px;
  padding: 3px 0 0 9px;
}

.side__header {
  display: flex;
  align-items: center;
  justify-content: space-between;
  height: 27px;
  padding: 0 14px 2px 10px;
  background-color: var(--color-accent);
  color: #fff;
}

.side__title {
  font-size: 14px;
  font-weight: bold;
  line-height: 18px;
}

.side__collapse svg {
  display: block;
  width: 10px;
  height: 8px;
}

.tabs {
  display: flex;
  align-items: flex-end;
  height: 26px;
  padding-left: 2px;
  border-bottom: 1px solid var(--color-line);
}

.tab {
  height: 22px;
  padding: 0 4px 0 5px;
  border: 1px solid var(--color-line);
  border-width: 1px 0 0 1px;
  background-color: #f5f5f5;
  color: var(--color-muted);
  white-space: nowrap;
}

.tab--active {
  height: 24px;
  margin-bottom: -1px;
  border-width: 2px 1px 0;
  border-top-color: var(--color-accent);
  background-color: #fff;
  color: var(--color-accent);
}

.pane {
  display: flex;
  flex: 1;
  flex-direction: column;
  gap: 8px;
  margin-left: 1px;
  padding: 9px 0 4px 4px;
  border-left: 1px solid var(--color-line);
  border-bottom: 1px solid var(--color-line);
}

.group {
  min-width: 0;
  margin: 0;
  padding: 3px 5px 2px;
  border: 1px solid #7aa5c8;
}

.group legend {
  margin-left: 1px;
  padding: 0 4px;
  color: var(--color-accent);
}

.absence {
  display: grid;
  grid-template-columns: 34px 118px 39px 1fr;
  align-items: center;
  gap: 4px 5px;
}

.absence label {
  padding-top: 1px;
  text-align: right;
}

.absence .absence__check {
  grid-column: span 2;
  padding: 0 0 0 6px;
}

.absence__type {
  grid-column: span 3;
}

.group__buttons {
  display: flex;
  justify-content: space-between;
  padding-top: 4px;
}

.button {
  display: flex;
  align-items: center;
  justify-content: center;
  gap: 8px;
  height: 22px;
  border: 1px solid #bbb;
  background-color: #e9e9e9;
}

.button--add {
  justify-content: flex-start;
  width: 73px;
  padding-left: 3px;
}

.button--cancel {
  width: 81px;
}

.group--grow {
  display: flex;
  flex: 1;
  flex-direction: column;
  padding: 11px 10px 5px;
}

.group--grow legend {
  margin-left: -4px;
}

.posted__view {
  display: flex;
  align-items: center;
  gap: 5px;
  padding-left: 16px;
}

.posted__view label {
  font: 12px/16px var(--font-tool);
}

.posted__view .field {
  width: 140px;
}

.posted__tools {
  display: flex;
  gap: 8px;
  margin: 12px 0 0 3px;
  padding: 7px 0 6px 3px;
  border-top: 1px solid var(--color-line);
}

.posted__filter {
  padding: 6px 5px 5px;
}

.posted__filter .field {
  width: 120px;
}

.posted__list {
  flex: 1;
  border: 1px solid var(--color-line);
}

.posted {
  width: 100%;
  table-layout: fixed;
  border-spacing: 0;
}

.posted th {
  height: 20px;
  padding: 0 2px;
  border-right: 1px solid var(--color-line);
  border-bottom: 1px solid var(--color-line);
  background-color: #f5f5f5;
  font-weight: normal;
  text-align: left;
  white-space: nowrap;
}

.posted th:last-child {
  border-right: 0;
}

.posted .arrow {
  float: right;
  margin-top: 5px;
}

.posted__mark {
  width: 17px;
}

.posted__from {
  width: 55px;
}

.posted__dots {
  width: 20px;
}

.posted__to {
  width: 39px;
}

.posted__out {
  width: 52px;
}

.hscroll {
  display: flex;
  align-items: center;
  height: 17px;
  margin-top: 1px;
  border: 1px solid var(--color-line);
}

.hscroll__button {
  display: flex;
  align-items: center;
  justify-content: center;
  width: 16px;
  height: 100%;
  border-right: 1px solid var(--color-line);
}

.hscroll__button:last-child {
  border-right: 0;
  border-left: 1px solid var(--color-line);
}

.hscroll__thumb {
  flex: 1;
  height: 9px;
  margin-right: 7px;
  background-color: #b8b8b8;
}

.nav {
  margin-top: 5px;
  padding-top: 1px;
  border-top: 2px solid #a8a8a8;
}

.nav__item {
  display: flex;
  align-items: center;
  gap: 6px;
  height: 38px;
  padding-left: 11px;
  border-bottom: 1px solid var(--color-line);
  background-color: #dadada;
  font-weight: bold;
  color: inherit;
  text-decoration: none;
}

.nav__item--active {
  border-color: var(--color-accent);
  background-color: var(--color-accent);
  color: #fff;
}

.shortcuts {
  display: flex;
  justify-content: flex-end;
  gap: 6px;
  padding: 6px 10px 9px 0;
}

.shortcuts .tool:last-child {
  padding-left: 4px;
}

.shortcuts .caret {
  border-width: 4px 4px 0;
  border-top-color: #777;
}
```
